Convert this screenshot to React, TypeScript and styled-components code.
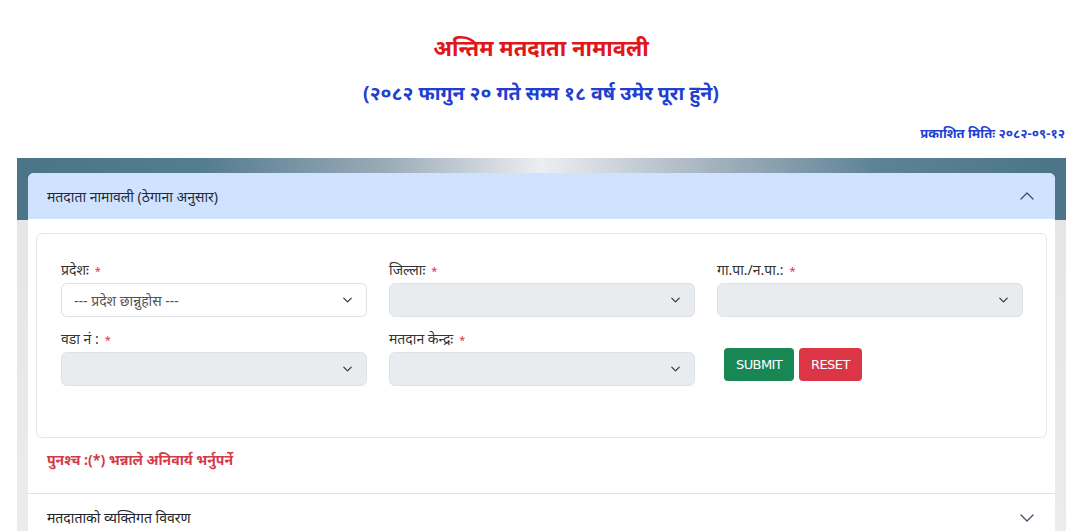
import React from "react";
import styled, { createGlobalStyle } from "styled-components";

const GlobalStyle = createGlobalStyle`
  html, body { margin: 0; padding: 0; background: #fff; }
  body { font-family: "Noto Sans", "Liberation Sans", sans-serif; color: #212529; }
  * { box-sizing: border-box; }
`;

const Page = styled.div`
  width: 1082px;
  height: 531px;
  overflow: hidden;
  display: flex;
  flex-direction: column;
`;

const Heading = styled.header`
  display: flex;
  flex-direction: column;
  align-items: center;
  padding-top: 30px;
`;

const Title = styled.h1`
  margin: 0;
  font-size: 22px;
  line-height: 34px;
  font-weight: 700;
  color: #e0161b;
`;

const Subtitle = styled.h2`
  margin: 14px 0 0;
  font-size: 19.5px;
  line-height: 30px;
  font-weight: 700;
  color: #1e3fd1;
`;

const Published = styled.div`
  align-self: flex-end;
  margin: 15px 17px 0 0;
  font-size: 13px;
  line-height: 20px;
  font-weight: 700;
  color: #1e3fd1;
`;

const Backdrop = styled.section`
  margin: 15px 16px 0 17px;
  flex: 1;
  padding: 15px 11px 0;
  background:
    linear-gradient(90deg, #4b7488 0%, #557d90 18%, #9aaab7 35%, #eceef1 50%, #a6b3bf 66%, #5d8295 82%, #4b7488 100%) top / 100% 62px no-repeat,
    linear-gradient(180deg, #e4e3e6, #ecebee);
`;

const Accordion = styled.div`
  background: #fff;
  border-radius: 6px 6px 0 0;
  overflow: hidden;
`;

const AccHeader = styled.div<{ $open?: boolean }>`
  display: flex;
  align-items: center;
  justify-content: space-between;
  height: ${(p) => (p.$open ? "46px" : "48px")};
  padding: 0 20px 0 19px;
  background: ${(p) => (p.$open ? "#cfe2ff" : "#fff")};
  border-top: ${(p) => (p.$open ? "none" : "1px solid #dee2e6")};
  font-size: 14px;
  color: ${(p) => (p.$open ? "#1f2a3a" : "#212529")};
`;

const AccBody = styled.div`
  padding: 14px 8px 0;
`;

const Card = styled.div`
  border: 1px solid #e3e6ea;
  border-radius: 6px;
  padding: 26px 24px 51px;
`;

const Grid = styled.div`
  display: grid;
  grid-template-columns: 306px 306px 306px;
  column-gap: 22px;
  row-gap: 12px;
`;

const Field = styled.div`
  display: flex;
  flex-direction: column;
  gap: 2px;
`;

const Label = styled.label`
  font-size: 14px;
  line-height: 20px;
  color: #333;
`;

const Req = styled.span`
  color: #dc3545;
  font-size: 11px;
  margin-left: 6px;
`;

const Select = styled.div<{ $disabled?: boolean }>`
  height: 34px;
  border: 1px solid #dee2e6;
  border-radius: 6px;
  background: ${(p) => (p.$disabled ? "#e9ecef" : "#fff")};
  display: flex;
  align-items: center;
  justify-content: space-between;
  padding: 0 12px 0 12px;
  font-size: 14px;
  color: #555;
`;

const Buttons = styled.div`
  display: flex;
  align-items: flex-start;
  gap: 5px;
  padding: 19px 0 0 7px;
`;

const Btn = styled.button<{ $tone: "green" | "red" }>`
  height: 33px;
  padding: 0 12px;
  border: none;
  border-radius: 4px;
  background: ${(p) => (p.$tone === "green" ? "#198754" : "#dc3545")};
  color: #fff;
  font-family: "DejaVu Sans", "Liberation Sans", sans-serif;
  font-size: 13px;
  letter-spacing: -0.6px;
  font-weight: 400;
`;

const Note = styled.p`
  margin: 0;
  padding: 11px 11px 22px;
  font-size: 14px;
  line-height: 22px;
  font-weight: 700;
  color: #d23a48;
`;

const Caret = () => (
  <svg width="13" height="10" viewBox="0 0 16 16" fill="none">
    <path d="m2 5 6 6 6-6" stroke="#343a40" strokeWidth="2" strokeLinecap="round" strokeLinejoin="round" />
  </svg>
);

const Chevron = ({ up }: { up?: boolean }) => (
  <svg width="16" height="16" viewBox="0 0 16 16" fill="none">
    <path d={up ? "M2 11 8 5l6 6" : "M2 5l6 6 6-6"} stroke="#3a4a5c" strokeWidth="1.2" strokeLinecap="round" strokeLinejoin="round" />
  </svg>
);

const fields1 = [
  { label: "प्रदेशः", placeholder: "--- प्रदेश छान्नुहोस ---", disabled: false },
  { label: "जिल्लाः", placeholder: "", disabled: true },
  { label: "गा.पा./न.पा.:", placeholder: "", disabled: true },
];
const fields2 = [
  { label: "वडा नं :", placeholder: "", disabled: true },
  { label: "मतदान केन्द्रः", placeholder: "", disabled: true },
];

export default function App() {
  return (
    <Page>
      <GlobalStyle />
      <Heading>
        <Title>अन्तिम मतदाता नामावली</Title>
        <Subtitle>(२०८२ फागुन २० गते सम्म १८ वर्ष उमेर पूरा हुने)</Subtitle>
        <Published>प्रकाशित मितिः २०८२-०९-१२</Published>
      </Heading>
      <Backdrop>
        <Accordion>
          <AccHeader $open>
            <span>मतदाता नामावली (ठेगाना अनुसार)</span>
            <Chevron up />
          </AccHeader>
          <AccBody>
            <Card>
              <Grid>
                {fields1.concat(fields2).map((f) => (
                  <Field key={f.label}>
                    <Label>
                      {f.label}
                      <Req>*</Req>
                    </Label>
                    <Select $disabled={f.disabled}>
                      <span>{f.placeholder}</span>
                      <Caret />
                    </Select>
                  </Field>
                ))}
                <Buttons>
                  <Btn $tone="green">SUBMIT</Btn>
                  <Btn $tone="red">RESET</Btn>
                </Buttons>
              </Grid>
            </Card>
            <Note>पुनश्च :(*) भन्नाले अनिवार्य भर्नुपर्ने</Note>
          </AccBody>
          <AccHeader>
            <span>मतदाताको व्यक्तिगत विवरण</span>
            <Chevron />
          </AccHeader>
        </Accordion>
      </Backdrop>
    </Page>
  );
}
